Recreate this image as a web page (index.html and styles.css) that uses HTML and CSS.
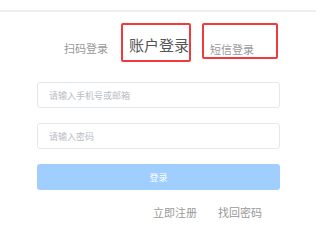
FILE: index.html
```html
<!DOCTYPE html>
<html lang="zh-CN">

<head>
    <meta charset="UTF-8">
    <meta name="viewport" content="width=device-width, initial-scale=1.0">
    <title>登录</title>
    <link rel="stylesheet" href="styles.css">
</head>

<body>
    <div class="topline"></div>
    <div class="tabs">
        <span class="tab tab-qr">扫码登录</span>
        <span class="tab tab-account">账户登录</span>
        <span class="tab tab-sms">短信登录</span>
    </div>
    <div class="form">
        <input class="field" type="text" placeholder="请输入手机号或邮箱">
        <input class="field" type="password" placeholder="请输入密码">
        <button class="btn-login">登录</button>
        <div class="links">
            <a href="#">立即注册</a>
            <a href="#">找回密码</a>
        </div>
    </div>
</body>

</html>
```

FILE: styles.css
```css
body {
    margin: 0;
    background: #fff;
    font-family: "Noto Sans CJK SC", "Noto Sans", sans-serif;
    width: 331px;
    height: 247px;
    overflow: hidden;
}

.topline {
    margin-top: 10px;
    width: 316px;
    height: 2px;
    background-color: #eeeeee;
}

.tabs {
    display: flex;
    align-items: flex-start;
    margin-top: 11px;
}

.tab {
    box-sizing: border-box;
    display: block;
    white-space: nowrap;
}

.tab-qr {
    margin-left: 64px;
    margin-top: 18px;
    font-size: 11px;
    line-height: 14px;
    color: #999;
}

.tab-account {
    margin-left: 13px;
    width: 70px;
    height: 39px;
    border: 2px solid #f23a3a;
    border-radius: 2px;
    padding: 10px 0 0 6px;
    font-size: 15px;
    line-height: 20px;
    color: #555;
}

.tab-sms {
    margin-left: 11px;
    width: 76px;
    height: 36px;
    border: 2px solid #f23a3a;
    border-radius: 2px;
    padding: 17px 0 0 6px;
    font-size: 11px;
    line-height: 14px;
    color: #999;
}

.form {
    display: flex;
    flex-direction: column;
    margin-left: 37px;
    margin-top: 20px;
    width: 243px;
}

.field {
    box-sizing: border-box;
    height: 26px;
    margin: 0 0 15px 0;
    padding: 0 11px;
    border: 1px solid #e4e7ed;
    border-radius: 3px;
    font-family: inherit;
    font-size: 9px;
    outline: none;
}

.field::placeholder {
    color: #b8bcc4;
}

.btn-login {
    height: 26px;
    border: none;
    border-radius: 3px;
    background-color: #a0cfff;
    color: #fff;
    font-family: inherit;
    font-size: 9px;
    padding: 0;
}

.links {
    display: flex;
    justify-content: flex-end;
    gap: 21px;
    margin-top: 15px;
    padding-right: 18px;
}

.links a {
    font-size: 11px;
    line-height: 14px;
    color: #999;
    text-decoration: none;
}
```
